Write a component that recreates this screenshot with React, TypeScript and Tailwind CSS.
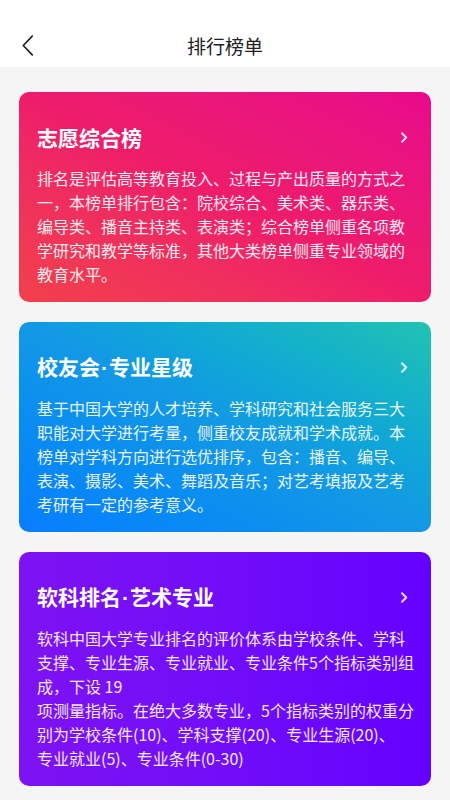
import React from 'react';

const CARDS = [
    {
        title: ['志愿综合榜'],
        bg: 'bg-gradient-to-tr from-[#f2404a] via-[#ee1c6a] to-[#e8088c]',
        lines: [
            '排名是评估高等教育投入、过程与产出质量的方式之',
            '一，本榜单排行包含：院校综合、美术类、器乐类、',
            '编导类、播音主持类、表演类；综合榜单侧重各项教',
            '学研究和教学等标准，其他大类榜单侧重专业领域的',
            '教育水平。',
        ],
    },
    {
        title: ['校友会', '专业星级'],
        bg: 'bg-gradient-to-tr from-[#0a7dff] via-[#1398e6] to-[#22c2b2]',
        lines: [
            '基于中国大学的人才培养、学科研究和社会服务三大',
            '职能对大学进行考量，侧重校友成就和学术成就。本',
            '榜单对学科方向进行选优排序，包含：播音、编导、',
            '表演、摄影、美术、舞蹈及音乐；对艺考填报及艺考',
            '考研有一定的参考意义。',
        ],
    },
    {
        title: ['软科排名', '艺术专业'],
        bg: 'bg-gradient-to-r from-[#7e12f2] to-[#6400ff]',
        lines: [
            '软科中国大学专业排名的评价体系由学校条件、学科',
            '支撑、专业生源、专业就业、专业条件5个指标类别组',
            '成，下设 19',
            '项测量指标。在绝大多数专业，5个指标类别的权重分',
            '别为学校条件(10)、学科支撑(20)、专业生源(20)、',
            '专业就业(5)、专业条件(0-30)',
        ],
    },
];

const Chevron = ({ className }: { className?: string }) => (
    <svg viewBox="0 0 8 12" className={className} fill="none" stroke="currentColor" strokeWidth="2" strokeLinecap="round" strokeLinejoin="round">
        <path d="M2 1.8 L6.2 6 L2 10.2" />
    </svg>
);

export default function App() {
    return (
        <div className="w-[450px] h-[800px] overflow-hidden bg-[#f5f5f5] font-['Noto_Sans_CJK_SC','Noto_Sans',sans-serif]">
            {/* Header */}
            <div className="bg-white pt-[24px] h-[67px]">
                <div className="relative h-[43px] flex items-center justify-center">
                    <button className="absolute left-[21px] top-[11px] text-[#222]">
                        <svg viewBox="0 0 12 20" className="w-[13px] h-[21px]" fill="none" stroke="currentColor" strokeWidth="1.6" strokeLinecap="round" strokeLinejoin="round">
                            <path d="M10.5 1 L2 10 L10.5 19" />
                        </svg>
                    </button>
                    <h1 className="text-[19px] text-[#222] leading-none">排行榜单</h1>
                </div>
            </div>

            {/* Cards */}
            <div className="flex flex-col gap-[20px] px-[19px] pt-[25px]">
                {CARDS.map(card => (
                    <div key={card.title.join()} className={`rounded-[10px] ${card.bg} pl-[18px] pr-[20px] pt-[27px] pb-[16px] text-white`}>
                        <div className="flex items-center justify-between h-[36px]">
                            <h2 className="text-[21px] font-bold leading-none">
                                {card.title.map((t, i) => (
                                    <React.Fragment key={i}>
                                        {i > 0 && <span className="font-['Liberation_Sans',sans-serif] mx-[1px]">·</span>}
                                        {t}
                                    </React.Fragment>
                                ))}
                            </h2>
                            <Chevron className="w-[8px] h-[13px] text-white/85 mr-[3px]" />
                        </div>
                        <p className="mt-[11px] text-[16px] leading-[24px] text-white/90 whitespace-nowrap">
                            {card.lines.map((l, i) => (
                                <React.Fragment key={i}>
                                    {l}
                                    {i < card.lines.length - 1 && <br />}
                                </React.Fragment>
                            ))}
                        </p>
                    </div>
                ))}
            </div>
        </div>
    );
}
